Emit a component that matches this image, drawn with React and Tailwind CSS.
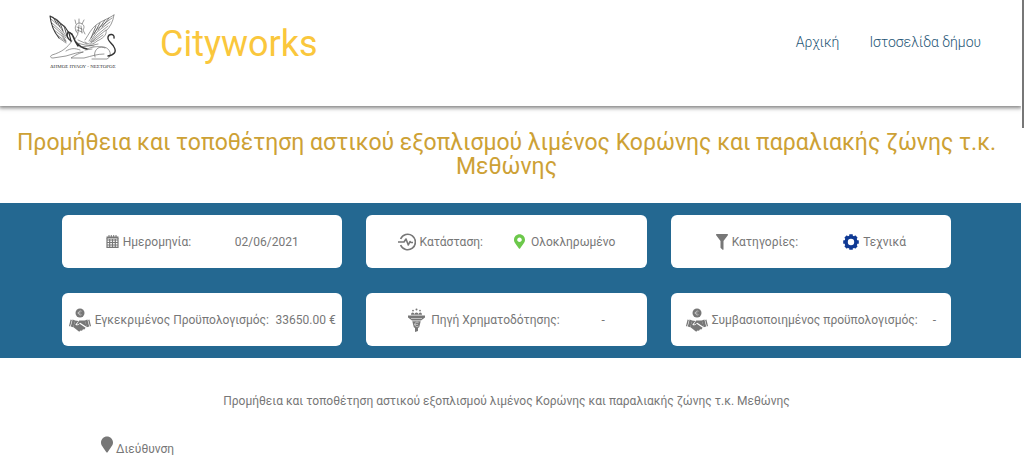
import { FaFilter, FaMapMarker, FaMapMarkerAlt } from "react-icons/fa";

const TITLE =
  "Προμήθεια και τοποθέτηση αστικού εξοπλισμού λιμένος Κορώνης και παραλιακής ζώνης τ.κ. Μεθώνης";

function Logo() {
  return (
    <svg viewBox="0 0 70 56" className="h-14 w-[70px]" role="img" aria-label="Δήμος Πύλου - Νέστορος">
      <g fill="none" stroke="#555" strokeLinecap="round" strokeLinejoin="round" strokeWidth="0.6">
        {/* left wing */}
        <path d="M2 2c1 9 4 16 9 22M2 2l7 4 3 3 5 4 4 6 2 8" stroke="#333" strokeWidth="1.1" />
        <path d="M3 5l9 8 6 9M4 9l8 7 6 8M5 12l9 8 4 7M6 16l8 6 4 6M8 20l9 7M11 24l7 5" />
        <path d="M5 3l4 7M8 5l4 8M12 9l3 8M16 12l3 10" strokeWidth="1" />
        {/* right wing */}
        <path d="M66 1c-6 4-13 6-18 10-5 4-7 9-11 15" />
        <path d="M66 1c-1 7-4 12-8 16 1 4-4 8-9 10-4 4-8 4-12 1" />
        <path d="M64 4l-15 11-8 12M62 8l-13 10-7 10M60 12l-11 9-6 7M58 16l-10 8-5 5M55 21l-10 7" />
        <path d="M61 4l-7 9M57 6l-7 10M52 9l-6 11M48 12l-5 12" strokeWidth="0.8" />
        {/* head and chest */}
        <path d="M28 17c-2-4 0-8 4-8 4 1 5 4 3 7l2 4M28 17l2 3-3 5M28 10l-1-4M31 9V5M34 10l2-4" />
        <path d="M29 13l5 2M29 16l5 2M31 11l-1 8M33 12l1 7" />
        <path d="M20 18c4 1 6 5 7 9 3 4 7 7 12 8M24 20c2 5 3 8 6 12M20 18c-2 4 0 7 3 9" stroke="#333" strokeWidth="1.4" />
        {/* body, paws and tail */}
        <path d="M24 27C19 34 14 38 4 41c-2 1-2 3 1 3l13-2c7-2 12-4 17-4M18 37c5-3 9-3 14-1" />
        <path d="M35 38c-6 2-9 4-12 6h13c8-2 13-4 20-4M39 35c7-3 13-3 18-1M47 43c-2-6 3-11 9-10 6 1 9 9 3 12H44" />
        <path d="M29 29l8 2 9 1M32 33l9-1 9-2M30 26l9 4M37 36l7-1" />
        <path d="M60 42c6-1 9-4 6-9-2-4-7-6-6-10 1-4 7-3 6 1" stroke="#333" strokeWidth="1.4" />
      </g>
      <text
        x="35"
        y="54"
        textAnchor="middle"
        fill="#333"
        className="font-['Liberation_Serif',serif] text-[5px]"
      >
        ΔΗΜΟΣ ΠΥΛΟΥ - ΝΕΣΤΟΡΟΣ
      </text>
    </svg>
  );
}

function CalendarIcon() {
  return (
    <svg viewBox="0 0 13 13" className="size-[13px]" fill="none" stroke="currentColor">
      <path d="M.5 2.5h12" strokeWidth="2" />
      <path d="M3 0v2M5.3 0v2M7.7 0v2M10 0v2" strokeWidth="1" />
      <path d="M1 3v9.4h11V3M1 5h11M1 7.5h11M1 10h11M3.7 4v8M6.5 4v8M9.3 4v8" strokeWidth="1.2" />
    </svg>
  );
}

function StatusIcon() {
  return (
    <svg viewBox="0 0 18 18" className="size-[18px]" fill="none" stroke="currentColor" strokeLinejoin="round">
      <path d="M2.6 6A7.7 7.7 0 1 1 2.6 12" strokeWidth="1.6" />
      <path d="M0 9h6l2-3 2.3 6 1.7-3.5 1 1h2" strokeWidth="1.6" />
    </svg>
  );
}

function GearIcon() {
  const teeth = [0, 45, 90, 135, 180, 225, 270, 315];
  return (
    <svg viewBox="0 0 16 16" className="size-4 text-[#103a94]">
      <circle cx="8" cy="8" r="4.9" fill="none" stroke="currentColor" strokeWidth="3.4" />
      {teeth.map((a) => (
        <rect key={a} x="6.2" y="0.2" width="3.6" height="3" rx="0.5" fill="currentColor" transform={`rotate(${a} 8 8)`} />
      ))}
    </svg>
  );
}

function BudgetIcon() {
  return (
    <svg viewBox="0 0 22 24" className="h-6 w-[22px]" fill="currentColor">
      <circle cx="11" cy="5" r="4.5" />
      <path d="M12.5 3.3a2 2 0 1 0 0 3.4M8.5 5h3" fill="none" stroke="#ccc" strokeWidth="0.8" />
      {/* cuffs */}
      <path d="M1.6 11.5l1.3.4-1.8 6.6-1.1-.5zM3.6 11.6l2.6.8-2 6.8-2.4-.7zM20.4 11.5l-1.3.4 1.8 6.6 1.1-.5zM18.4 11.6l-2.6.8 2 6.8 2.4-.7z" />
      {/* clasped hands */}
      <path d="M6.2 12.6l3.4.4-3.2 3.4c.8 1.6 2.8 1 4.2-.7l6 4.1-1.2 1.7-1.4-.3-1 1.5-1.5-.1-1.3 1.2-6-4.8z" />
      <path d="M10.2 12.6l5.7-.1 1.9 6.6-6.6-4.3c-1.2 1.4-2.6 2-3.5 1.6z" />
    </svg>
  );
}

function FundingIcon() {
  return (
    <svg viewBox="0 0 17 24" className="mr-[2px] h-6 w-[17px]" fill="currentColor">
      <circle cx="8.5" cy="1.4" r="1" />
      <circle cx="5" cy="2.6" r="0.9" />
      <circle cx="12" cy="2.6" r="0.9" />
      <path d="M3 6.7c0-3 3.4-3 3.4 0 .3-3 3.9-3 4.2 0 0-3 3.4-3 3.4 0z" />
      <path d="M0 7.5h17v2l-4 3H4l-4-3zM4.3 13.2h8.4l-1.5 6-1.2.8v3l-3 1v-4l-1.2-.8z" />
      <path d="M10.6 14.7a2.3 2.3 0 1 0 0 3.4M6.4 16.4H10M3 10.5h11" fill="none" stroke="#ddd" strokeWidth="0.7" />
    </svg>
  );
}

const cards = [
  { icon: <CalendarIcon />, label: "Ημερομηνία:", value: "02/06/2021" },
  {
    icon: <StatusIcon />,
    label: "Κατάσταση:",
    valueIcon: <FaMapMarkerAlt className="mr-[2px] h-[15px] w-[11px]" color="#6cc84b" />,
    value: "Ολοκληρωμένο",
  },
  { icon: <FaFilter className="h-4 w-3" preserveAspectRatio="none" />, label: "Κατηγορίες:", valueIcon: <GearIcon />, value: "Τεχνικά" },
  { icon: <BudgetIcon />, label: "Εγκεκριμένος Προϋπολογισμός:", value: "33650.00 €" },
  { icon: <FundingIcon />, label: "Πηγή Χρηματοδότησης:", value: "-" },
  { icon: <BudgetIcon />, label: "Συμβασιοποιημένος προϋπολογισμός:", value: "-" },
];

function InfoCard({ icon, label, valueIcon, value }) {
  return (
    <div className="flex h-[53px] items-center justify-evenly rounded-md bg-white whitespace-nowrap">
      <div className="flex items-center gap-1">
        {icon}
        <span>{label}</span>
      </div>
      <div className="flex items-center gap-1">
        {valueIcon}
        <span>{value}</span>
      </div>
    </div>
  );
}

export default function App() {
  return (
    <div className="flex h-screen overflow-hidden bg-white font-[Roboto,sans-serif] text-[12px] text-[#777]">
      <div className="min-w-0 flex-1">
        <header className="flex h-[106px] items-start justify-between pr-10 pl-12 shadow-[0_1px_4px_1px_rgba(0,0,0,0.5)]">
          <div className="flex items-start pt-[14px]">
            <Logo />
            <span className="ml-[42px] text-[36px] leading-[60px] text-[#fac73c]">Cityworks</span>
          </div>
          <nav className="flex gap-[30px] pt-8 text-[14px] leading-5 font-light text-[#1f5676]">
            <a href="#home">Αρχική</a>
            <a href="#site">Ιστοσελίδα δήμου</a>
          </nav>
        </header>

        <main>
          <h1 className="pt-[25px] pr-[22px] pb-6 pl-[14px] text-center text-[23px] leading-6 text-[#cda135]">{TITLE}</h1>

          <section className="grid grid-cols-3 gap-x-6 gap-y-[25px] bg-[#246891] py-3 pr-[70px] pl-[62px]">
            {cards.map((card) => (
              <InfoCard key={card.label} {...card} />
            ))}
          </section>

          <p className="mt-[34px] pr-2 text-center leading-[18px]">{TITLE}</p>

          <div className="mt-[26px] flex items-start pl-[101px]">
            <FaMapMarker className="mr-[3px] h-[17px] w-3" />
            <span className="pt-1 leading-[18px]">Διεύθυνση</span>
          </div>
        </main>
      </div>

      {/* scroll track */}
      <div className="w-[3px] bg-white">
        <div className="ml-px h-32 bg-[#777]" />
      </div>
    </div>
  );
}
